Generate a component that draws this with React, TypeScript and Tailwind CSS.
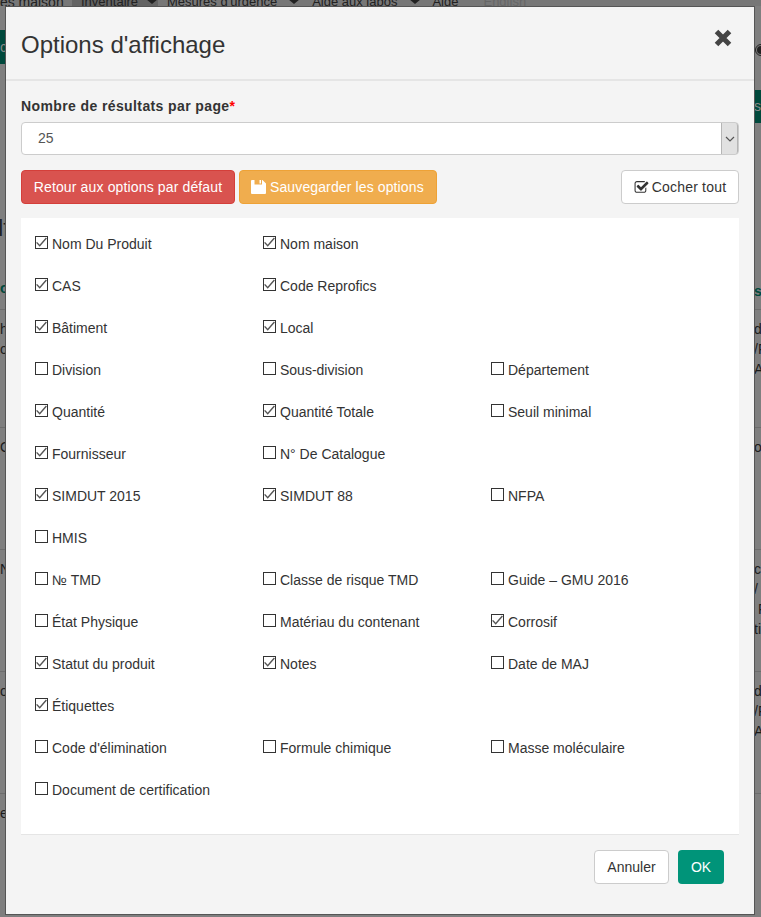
const OPTIONS: [string, boolean, string, boolean, string, boolean][] = [
  ["Nom Du Produit", true, "Nom maison", true, "", false],
  ["CAS", true, "Code Reprofics", true, "", false],
  ["Bâtiment", true, "Local", true, "", false],
  ["Division", false, "Sous-division", false, "Département", false],
  ["Quantité", true, "Quantité Totale", true, "Seuil minimal", false],
  ["Fournisseur", true, "N° De Catalogue", false, "", false],
  ["SIMDUT 2015", true, "SIMDUT 88", true, "NFPA", false],
  ["HMIS", false, "", false, "", false],
  ["№ TMD", false, "Classe de risque TMD", false, "Guide – GMU 2016", false],
  ["État Physique", false, "Matériau du contenant", false, "Corrosif", true],
  ["Statut du produit", true, "Notes", true, "Date de MAJ", false],
  ["Étiquettes", true, "", false, "", false],
  ["Code d'élimination", false, "Formule chimique", false, "Masse moléculaire", false],
  ["Document de certification", false, "", false, "", false],
];

// table rows of the page behind the overlay: only their edges show past the modal
const BACK_ROWS = [
  { height: "h-[118px]", left: ["h", "ol"], right: ["d", "/F", "AN"] },
  { height: "h-[122px]", left: ["O"], right: ["oir"] },
  { height: "h-[122px]", left: ["N"], right: ["ci", "/", "\u00a0F", "tic"] },
  { height: "h-[122px]", left: ["o"], right: ["d", "/F", "AN"] },
  { height: "h-[124px]", left: ["e("], right: [] as string[] },
];

function SaveIcon() {
  return (
    <svg viewBox="0 0 15 14" className="h-[14px] w-[15px] shrink-0" fill="currentColor">
      <path
        fillRule="evenodd"
        d="M1 0H11.5L15 3.5V13a1 1 0 0 1-1 1H1a1 1 0 0 1-1-1V1a1 1 0 0 1 1-1ZM3.5 0V4.5H11V0H8.5V3.5H10V0Z"
      />
    </svg>
  );
}

function CheckSquareIcon() {
  return (
    <svg viewBox="0 0 1792 1792" className="size-[15px] shrink-0" fill="currentColor">
      <path d="M1472 930v318q0 119-84.5 203.5t-203.5 84.5h-832q-119 0-203.5-84.5t-84.5-203.5v-832q0-119 84.5-203.5t203.5-84.5h832q63 0 117 25 15 7 18 23 3 17-9 29l-49 49q-10 10-23 10-3 0-9-2-23-6-45-6h-832q-66 0-113 47t-47 113v832q0 66 47 113t113 47h832q66 0 113-47t47-113v-254q0-13 9-22l64-64q10-10 23-10 6 0 12 3 20 8 20 29zm231-489l-814 814q-24 24-57 24t-57-24l-430-430q-24-24-24-57t24-57l110-110q24-24 57-24t57 24l263 263 647-647q24-24 57-24t57 24l110 110q24 24 24 57t-24 57z" />
    </svg>
  );
}

function Option({ label, checked }: { label: string; checked: boolean }) {
  if (!label) return <div />;
  return (
    <label className="flex h-[42px] items-start gap-[4px] text-[14px] leading-5 text-[#333]">
      <span className="mt-[2px] flex size-[13px] shrink-0 items-center justify-center border border-[#333] bg-white">
        {checked && (
          <svg viewBox="0 0 11 11" className="size-[11px]" fill="none" stroke="#555" strokeWidth="1.4">
            <path d="M.6 5.4 3.7 8.8 10.4 1" />
          </svg>
        )}
      </span>
      <span>{label}</span>
    </label>
  );
}

export default function App() {
  return (
    <div className="relative h-[917px] w-[761px] overflow-hidden bg-[#7f7f7f] font-['Liberation_Sans',Arial,sans-serif] text-[14px] text-[#1c1c1c]">
      {/* page behind the overlay */}
      <div className="h-[6px] overflow-hidden bg-[#777] whitespace-nowrap">
        <div className="-mt-[8px] flex h-[20px] items-end text-[13px] leading-5 text-[#222]">
          <span className="-ml-[4px] w-[76px] text-[14px]">tes maison</span>
          <span className="flex h-[20px] w-[86px] items-end bg-[#636363] pl-[9px]">
            Inventaire
            <span className="mb-[8px] ml-[8px] h-0 w-0 border-x-[6px] border-t-[5px] border-x-transparent border-t-[#222]" />
          </span>
          <span className="ml-[9px]">Mesures d'urgence</span>
          <span className="mb-[8px] ml-[11px] h-0 w-0 border-x-[6px] border-t-[5px] border-x-transparent border-t-[#222]" />
          <span className="ml-[12px]">Aide aux labos</span>
          <span className="mb-[8px] ml-[12px] h-0 w-0 border-x-[6px] border-t-[5px] border-x-transparent border-t-[#222]" />
          <span className="ml-[11px]">Aide</span>
          <span className="ml-[25px] text-[#666]">English</span>
        </div>
      </div>
      <div className="flex h-[84px] items-start justify-between pt-[24px]">
        <div className="flex h-[34px] w-[6px] items-center overflow-hidden bg-[#00493c] text-[#888]">c</div>
        <div className="mt-[14px] w-[6px] overflow-hidden">
          <div className="flex size-[12px] items-center justify-center rounded-full border border-[#222]">
            <div className="size-[8px] rounded-full bg-[#222]" />
          </div>
        </div>
      </div>
      <div className="flex h-[219px] items-start justify-between">
        <div className="w-[6px] overflow-hidden whitespace-nowrap">
          <div className="mt-[122px] -ml-[2px] text-[24px] leading-[32px] text-[#222]">lf</div>
          <div className="mt-[34px] font-bold text-[#00493c]">o</div>
        </div>
        <div className="w-[7px] overflow-hidden whitespace-nowrap">
          <div className="flex h-[33px] items-center bg-[#00493c] text-[#888]">st</div>
          <div className="mt-[158px] font-bold text-[#00493c]">s</div>
        </div>
      </div>
      {BACK_ROWS.map((row, i) => (
        <div key={i} className={`${row.height} flex justify-between overflow-hidden border-t border-[#6d6d6d] pt-[9px] leading-5`}>
          <div className="w-[6px] overflow-hidden whitespace-nowrap">
            {row.left.map((t) => (
              <div key={t}>{t}</div>
            ))}
          </div>
          <div className="w-[7px] overflow-hidden whitespace-nowrap">
            {row.right.map((t) => (
              <div key={t}>{t}</div>
            ))}
          </div>
        </div>
      ))}

      {/* modal */}
      <div className="absolute top-[6px] left-[5px] flex h-[909px] w-[750px] flex-col border border-[#555] bg-[#f4f4f4]">
        <div className="flex h-[74px] shrink-0 items-start justify-between border-b-2 border-[#e5e5e5] pr-[22px] pl-[15px]">
          <h4 className="mt-[22px] text-[24px] leading-[32px] text-[#333]">Options d'affichage</h4>
          <svg viewBox="0 0 18 18" className="mt-[22px] size-[18px] text-[#444]" fill="none" stroke="currentColor" strokeWidth="5">
            <path d="M2.5 2.5l13 13M15.5 2.5l-13 13" />
          </svg>
        </div>
        <div className="flex-1 px-[15px] pt-[15px]">
          <div className="h-[20px] text-[14px] leading-5 font-bold tracking-[0.39px] text-[#333]">
            Nombre de résultats par page<span className="text-[#f00]">*</span>
          </div>
          <div className="mt-[6px] flex h-[33px] items-stretch rounded-[4px] border border-[#ccc] bg-white">
            <span className="flex-1 pl-[16px] leading-[31px] text-[#555]">25</span>
            <span className="flex w-[17px] items-center justify-center rounded-r-[3px] border-x border-[#b5b5b5] bg-[#e1e1e1]">
              <svg viewBox="0 0 10 6" className="h-[6px] w-[10px]" fill="none" stroke="#555" strokeWidth="1.2">
                <path d="M1 1l4 4 4-4" />
              </svg>
            </span>
          </div>
          <div className="mt-[15px] flex items-center gap-[4px]">
            <button className="h-[34px] w-[214px] rounded-[4px] border border-[#d43f3a] bg-[#d9534f] text-center tracking-[0.14px] text-white">
              Retour aux options par défaut
            </button>
            <button className="flex h-[34px] w-[198px] items-center gap-[4px] rounded-[4px] border border-[#eea236] bg-[#f0ad4e] pl-[11px] tracking-[0.12px] text-white">
              <SaveIcon />
              Sauvegarder les options
            </button>
            <button className="ml-auto flex h-[34px] w-[118px] items-center justify-center gap-[3px] rounded-[4px] border border-[#ccc] bg-white tracking-[0.2px] text-[#333]">
              <CheckSquareIcon />
              Cocher tout
            </button>
          </div>
          <div className="mt-[14px] grid h-[617px] grid-cols-[228px_228px_1fr] content-start border-b border-[#e5e5e5] bg-white pt-[16px] pl-[14px]">
            {OPTIONS.map((row) => (
              <div key={row[0]} className="contents">
                <Option label={row[0]} checked={row[1]} />
                <Option label={row[2]} checked={row[3]} />
                <Option label={row[4]} checked={row[5]} />
              </div>
            ))}
          </div>
          <div className="mt-[15px] flex justify-end gap-[9px] pr-[15px]">
            <button className="h-[34px] w-[75px] rounded-[4px] border border-[#ccc] bg-white text-[#333]">Annuler</button>
            <button className="h-[34px] w-[46px] rounded-[4px] bg-[#009479] text-white">OK</button>
          </div>
        </div>
      </div>
    </div>
  );
}
